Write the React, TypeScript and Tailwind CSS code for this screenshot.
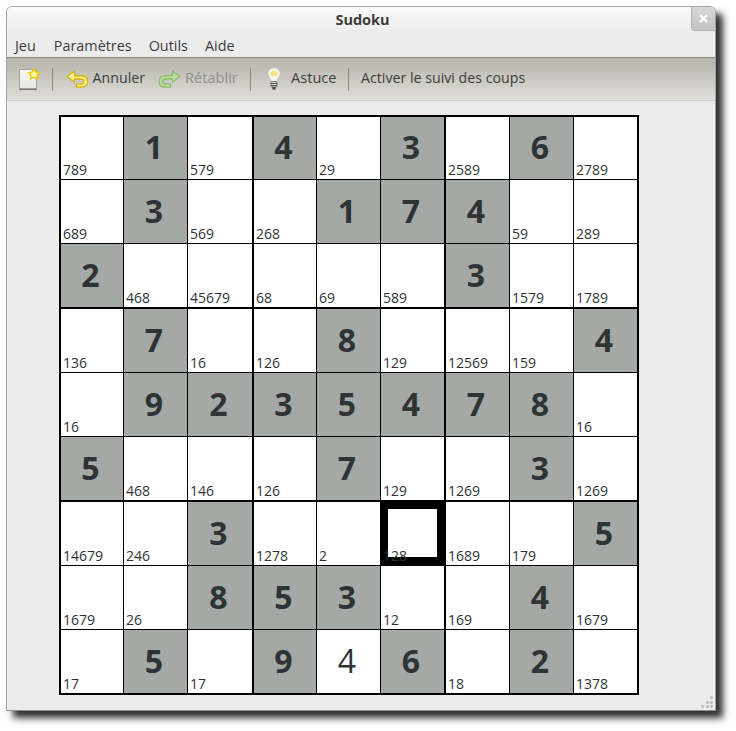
const board: string[][] = [
  ['789', 'G1', '579', 'G4', '29', 'G3', '2589', 'G6', '2789'],
  ['689', 'G3', '569', '268', 'G1', 'G7', 'G4', '59', '289'],
  ['G2', '468', '45679', '68', '69', '589', 'G3', '1579', '1789'],
  ['136', 'G7', '16', '126', 'G8', '129', '12569', '159', 'G4'],
  ['16', 'G9', 'G2', 'G3', 'G5', 'G4', 'G7', 'G8', '16'],
  ['G5', '468', '146', '126', 'G7', '129', '1269', 'G3', '1269'],
  ['14679', '246', 'G3', '1278', '2', '128', '1689', '179', 'G5'],
  ['1679', '26', 'G8', 'G5', 'G3', '12', '169', 'G4', '1679'],
  ['17', 'G5', '17', 'G9', 'U4', 'G6', '18', 'G2', '1378'],
];

function Cell({ value, row, col }: { value: string; row: number; col: number }) {
  const given = value[0] === 'G';
  const user = value[0] === 'U';
  const selected = row === 6 && col === 5;
  const borders = `${col < 8 ? (col % 3 === 2 ? 'border-r-2' : 'border-r') : ''} ${row < 8 ? (row % 3 === 2 ? 'border-b-2' : 'border-b') : ''} border-black`;

  return (
    <div className={`relative flex items-center justify-center pb-[2px] pr-[3px] ${borders} ${given ? 'bg-[#a5a9a5]' : 'bg-white'}`}>
      {given && <span className="text-[32px] font-bold leading-none text-[#2e3436]">{value[1]}</span>}
      {user && <span className="text-[32px] leading-none text-[#2e3436]">{value[1]}</span>}
      {selected && <div className="absolute -left-px -right-px -top-px bottom-0 border-8 border-black" />}
      {!given && !user && (
        <span className="absolute bottom-[1px] left-[2px] text-[14px] leading-[16px] text-[#2e3436]">{value}</span>
      )}
    </div>
  );
}

function NewIcon() {
  return (
    <svg width="22" height="23" viewBox="0 0 22 23">
      <defs>
        <linearGradient id="page" x1="0" y1="0" x2="0" y2="1">
          <stop offset="0" stopColor="#fbfbf8" />
          <stop offset="1" stopColor="#e6e6e0" />
        </linearGradient>
      </defs>
      <path d="M.5 1.500h17v19H.5z" fill="url(#page)" stroke="#a4a39a" />
      <path d="M0 21.500h18" stroke="#77766e" />
      <path d="M15 1l1.900 3 3.400.7-2.300 2.600.4 3.500-3.400-1.500-3.400 1.500.4-3.500L9.700 4.700l3.400-.7z" fill="#fff9a8" stroke="#eccb10" strokeWidth="1.500" />
    </svg>
  );
}

function ArrowIcon({ flip, fill, stroke }: { flip?: boolean; fill: string; stroke: string }) {
  return (
    <svg width="23" height="18" viewBox="0 0 23 18" className={flip ? '-scale-x-100' : ''}>
      <path d="M8.500 1 1 6.500l7.500 5.500V9h6c2.500 0 3.700 1 3.700 2.600 0 1.500-1.300 2.600-3.700 2.600h-4v3h5.200c4 0 6.300-2.400 6.300-5.800 0-3.500-2.500-5.700-6.500-5.700h-6.500z" fill={fill} stroke={stroke} strokeWidth="1.300" strokeLinejoin="round" />
    </svg>
  );
}

function BulbIcon() {
  return (
    <svg width="16" height="23" viewBox="0 0 16 23">
      <path d="M8 .8c3.600 0 6.200 2.600 6.200 5.900 0 3-2.700 4.500-3.200 7.800H5c-.5-3.300-3.200-4.800-3.200-7.800C1.800 3.400 4.400.8 8 .8z" fill="#f4f4ec" stroke="#bdbdb3" />
      <ellipse cx="8" cy="6.500" rx="3.600" ry="2.800" fill="#f4e57f" />
      <rect x="5" y="14.500" width="6" height="5.500" rx="1" fill="#dcdcd6" stroke="#75756d" />
      <path d="M5 16.500h6M5 18.500h6" stroke="#55554f" />
      <rect x="6.500" y="20" width="3" height="2.500" fill="#3f3f3a" />
    </svg>
  );
}

function Sep() {
  return <div className="h-[23px] w-px bg-[#8e8d84]" />;
}

const dot = 'h-[3px] w-[3px] rounded-full bg-[#b9b9b2]';

export default function App() {
  return (
    <div className="h-[731px] w-[736px] bg-white pl-[6px] pt-[6px] font-['Open_Sans',sans-serif]">
      <div className="relative flex h-[705px] w-[710px] flex-col overflow-hidden rounded-t-[6px] border border-t-[#a8a8a8] border-x-[#a5a5a5] border-b-[#8f8f8f] bg-[#ececec] shadow-[7px_7px_7px_#2f2f2f]">
        <div className="relative flex h-[27px] items-center justify-center bg-gradient-to-b from-[#fafafa] to-[#ececec] pb-[1px] pl-[3px] text-[14.500px] font-bold text-[#3c3c3c]">
          Sudoku
          <div className="absolute right-0 top-0 flex h-[24px] w-[24px] items-center justify-center rounded-bl-[4px] border-b border-l border-[#b5b5b5] bg-gradient-to-b from-[#d8d8d8] to-[#c2c2c2]">
            <svg width="9" height="9" viewBox="0 0 9 9">
              <path d="M1 1l7 7M8 1L1 8" stroke="#fff" strokeWidth="2.200" />
            </svg>
          </div>
        </div>

        <div className="flex h-[23px] items-center gap-[17px] pl-2 text-[14.400px] text-[#3c3c3c]">
          <span className="mr-[1px]">Jeu</span>
          <span>Paramètres</span>
          <span>Outils</span>
          <span>Aide</span>
        </div>

        <div className="flex h-[44px] items-center border-y border-t-[#8a887f] border-b-[#cfcfc9] bg-gradient-to-b from-[#b5b3aa] to-[#e0dfd9] text-[14.200px] text-[#3c3c3c]">
          <div className="ml-[12px] mr-[11px]"><NewIcon /></div>
          <Sep />
          <div className="ml-[13px] flex w-[79px] items-center gap-[4px]">
            <ArrowIcon fill="#f9ef90" stroke="#d4b400" />
            <span className="mb-[2px]">Annuler</span>
          </div>
          <div className="ml-[13px] flex w-[92px] items-center gap-[4px] text-[#8f8f89]">
            <ArrowIcon flip fill="#b9dc9c" stroke="#8fbb74" />
            <span className="mb-[2px] text-[14.600px]">Rétablir</span>
          </div>
          <Sep />
          <div className="ml-[15px] flex w-[82px] items-center gap-[9px]">
            <BulbIcon />
            <span className="mb-[2px] text-[14.600px]">Astuce</span>
          </div>
          <Sep />
          <span className="mb-[2px] ml-[12px]">Activer le suivi des coups</span>
        </div>

        <div className="flex-1 pl-[52px] pt-[14px]">
          <div className="grid h-[580px] w-[580px] grid-cols-[63px_64px_66px_63px_64px_65px_64px_64px_63px] grid-rows-[63px_64px_65px_64px_64px_65px_64px_64px_63px] border-2 border-black bg-white">
            {board.map((cells, row) =>
              cells.map((value, col) => <Cell key={`${row}-${col}`} value={value} row={row} col={col} />),
            )}
          </div>
        </div>

        <div className="absolute bottom-[2px] right-[2px] grid grid-cols-3 gap-[1.500px]">
          <i /><i /><i className={dot} />
          <i /><i className={dot} /><i className={dot} />
          <i className={dot} /><i className={dot} /><i className={dot} />
        </div>
      </div>
    </div>
  );
}
